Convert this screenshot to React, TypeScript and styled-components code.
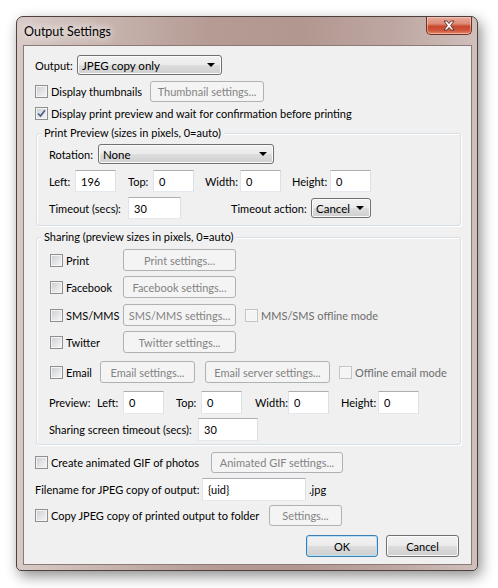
import React from 'react'
import styled, { createGlobalStyle } from 'styled-components'

const GlobalStyle = createGlobalStyle`
  html, body {
    margin: 0;
    padding: 0;
    background: #ffffff;
  }
  body {
    width: 498px;
    height: 588px;
    overflow: hidden;
    font-family: Lato, "Noto Sans", sans-serif;
    font-size: 11px;
    color: #000;
  }
`

const Page = styled.div`
  padding: 16px 0 0 16px;
`

const Window = styled.div`
  width: 462px;
  height: 555px;
  box-sizing: border-box;
  border: 1px solid #4f403d;
  border-radius: 7px 7px 5px 5px;
  background: linear-gradient(90deg, #d8cbc7 0%, #c9b5b0 18%, #b59b94 42%, #b29790 62%, #bea7a2 82%, #cfbfbb 100%);
  box-shadow: 3px 5px 14px rgba(0, 0, 0, 0.45);
  display: flex;
  flex-direction: column;
`

const TitleBar = styled.div`
  height: 28px;
  display: flex;
  justify-content: space-between;
  align-items: flex-start;
`

const Title = styled.div`
  font-size: 12.5px;
  padding: 7px 0 0 7px;
  color: #000;
  text-shadow: 0 0 8px #fff, 0 0 12px #fff;
`

const CloseButton = styled.div`
  width: 46px;
  height: 18px;
  margin-right: 5px;
  box-sizing: border-box;
  border: 1px solid #6e3127;
  border-top: none;
  border-radius: 0 0 5px 5px;
  background: linear-gradient(#e8ab9c 0%, #dc8a76 40%, #c8472f 55%, #d0583c 80%, #e48b6c 100%);
  box-shadow: inset 0 0 0 1px rgba(255, 220, 210, 0.5);
  display: flex;
  align-items: center;
  justify-content: center;
`

const Client = styled.div`
  margin: 0 5px 5px 6px;
  height: 520px;
  box-sizing: border-box;
  border: 1px solid #8c7a76;
  background: #f0f0f0;
  padding-left: 11px;
  display: flex;
  flex-direction: column;
`

const Row = styled.div<{ $mt: number; $h: number; $end?: boolean }>`
  display: flex;
  align-items: center;
  margin-top: ${(p) => p.$mt}px;
  height: ${(p) => p.$h}px;
  justify-content: ${(p) => (p.$end ? 'flex-end' : 'flex-start')};
  padding-right: ${(p) => (p.$end ? 12 : 0)}px;
`

const Label = styled.span<{ $w?: number; $ml?: number; $dim?: boolean }>`
  display: inline-block;
  flex: none;
  width: ${(p) => (p.$w ? `${p.$w}px` : 'auto')};
  margin-left: ${(p) => p.$ml ?? 0}px;
  white-space: nowrap;
  color: ${(p) => (p.$dim ? '#6d6d6d' : '#000')};
`

const CheckCell = styled.label<{ $w?: number; $ml?: number }>`
  display: flex;
  align-items: center;
  flex: none;
  width: ${(p) => (p.$w ? `${p.$w}px` : 'auto')};
  margin-left: ${(p) => p.$ml ?? 0}px;
  white-space: nowrap;
`

const Box = styled.span<{ $disabled?: boolean }>`
  width: 13px;
  height: 13px;
  box-sizing: border-box;
  flex: none;
  margin-right: 3px;
  border: 1px solid ${(p) => (p.$disabled ? '#c4c4c4' : '#8e8f8f')};
  background: ${(p) =>
    p.$disabled
      ? '#f4f4f4'
      : 'linear-gradient(135deg, #c9ccd1 0%, #e4e5e7 55%, #f7f7f7 100%)'};
  box-shadow: inset 0 0 0 1px ${(p) => (p.$disabled ? '#f7f7f7' : '#f4f4f4')};
  display: flex;
  align-items: center;
  justify-content: center;
`

const Button = styled.div<{ $w: number; $h: number; $ml?: number; $disabled?: boolean; $default?: boolean }>`
  width: ${(p) => p.$w}px;
  height: ${(p) => p.$h}px;
  margin-left: ${(p) => p.$ml ?? 0}px;
  flex: none;
  box-sizing: border-box;
  border-radius: 3px;
  display: flex;
  align-items: center;
  justify-content: center;
  white-space: nowrap;
  border: 1px solid ${(p) => (p.$disabled ? '#adb2b5' : p.$default ? '#3c7fb1' : '#707070')};
  color: ${(p) => (p.$disabled ? '#838383' : '#000')};
  background: ${(p) =>
    p.$disabled
      ? '#f4f4f4'
      : 'linear-gradient(#f2f2f2 0%, #ebebeb 49%, #dddddd 51%, #cfcfcf 100%)'};
  box-shadow: inset 0 0 0 1px ${(p) => (p.$disabled ? '#f4f4f4' : p.$default ? '#b8e1f9' : '#fbfbfb')};
`

const Select = styled.div<{ $w: number }>`
  width: ${(p) => p.$w}px;
  height: 20px;
  flex: none;
  box-sizing: border-box;
  border: 1px solid #707070;
  border-radius: 3px;
  background: linear-gradient(#f2f2f2 0%, #ebebeb 49%, #dddddd 51%, #cfcfcf 100%);
  box-shadow: inset 0 0 0 1px #fbfbfb;
  display: flex;
  align-items: center;
  justify-content: space-between;
  padding: 0 6px 0 4px;
  white-space: nowrap;
  font-size: 11.5px;
`

const Arrow = styled.span`
  width: 0;
  height: 0;
  border-left: 4px solid transparent;
  border-right: 4px solid transparent;
  border-top: 4px solid #000;
`

const Input = styled.div<{ $w: number; $h: number }>`
  width: ${(p) => p.$w}px;
  height: ${(p) => p.$h}px;
  flex: none;
  box-sizing: border-box;
  border: 1px solid;
  border-color: #abadb3 #dbdfe6 #e3e9ef #e2e3ea;
  background: #fff;
  padding-left: 5px;
  display: flex;
  align-items: center;
  white-space: nowrap;
`

const Group = styled.div<{ $mt: number; $h: number }>`
  position: relative;
  margin-top: ${(p) => p.$mt}px;
  margin-left: 1px;
  width: 425px;
  height: ${(p) => p.$h}px;
  box-sizing: border-box;
  border: 1px solid #d5dfe5;
  border-radius: 3px;
  box-shadow: inset 1px 1px 0 #fff, 1px 1px 0 #fff;
  padding-left: 12px;
  display: flex;
  flex-direction: column;
`

const Legend = styled.span`
  position: absolute;
  top: -8px;
  left: 4px;
  padding: 0 3px;
  background: #f0f0f0;
  white-space: nowrap;
`

const Check = ({ checked, disabled }: { checked?: boolean; disabled?: boolean }) => (
  <Box $disabled={disabled}>
    {checked && (
      <svg width="9" height="9" viewBox="0 0 9 9">
        <path d="M1 4.5 L3.5 7 L8 1.2" fill="none" stroke="#4a5f8c" strokeWidth="1.7" />
      </svg>
    )}
  </Box>
)

const CloseGlyph = () => (
  <svg width="14" height="11" viewBox="0 0 14 11">
    <path
      d="M2 1 L5 1 L7 3.5 L9 1 L12 1 L8.6 5.5 L12 10 L9 10 L7 7.5 L5 10 L2 10 L5.4 5.5 Z"
      fill="#fff"
      stroke="#5a2a22"
      strokeWidth="0.9"
      strokeLinejoin="round"
    />
  </svg>
)

export default function App() {
  return (
    <Page>
      <GlobalStyle />
      <Window>
        <TitleBar>
          <Title>Output Settings</Title>
          <CloseButton>
            <CloseGlyph />
          </CloseButton>
        </TitleBar>
        <Client>
          <Row $mt={9} $h={20}>
            <Label $w={42}>Output:</Label>
            <Select $w={145}>
              JPEG copy only
              <Arrow />
            </Select>
          </Row>
          <Row $mt={6} $h={21}>
            <CheckCell $w={115}>
              <Check />
              Display thumbnails
            </CheckCell>
            <Button $w={114} $h={21} $disabled>
              Thumbnail settings...
            </Button>
          </Row>
          <Row $mt={3} $h={17}>
            <CheckCell>
              <Check checked />
              Display print preview and wait for confirmation before printing
            </CheckCell>
          </Row>

          <Group $mt={11} $h={93}>
            <Legend>Print Preview (sizes in pixels, 0=auto)</Legend>
            <Row $mt={10} $h={20}>
              <Label $w={49}>Rotation:</Label>
              <Select $w={176}>
                None
                <Arrow />
              </Select>
            </Row>
            <Row $mt={6} $h={22}>
              <Label $w={26}>Left:</Label>
              <Input $w={41} $h={22}>196</Input>
              <Label $w={25} $ml={12}>Top:</Label>
              <Input $w={41} $h={22}>0</Input>
              <Label $w={35} $ml={11}>Width:</Label>
              <Input $w={41} $h={22}>0</Input>
              <Label $w={38} $ml={11}>Height:</Label>
              <Input $w={41} $h={22}>0</Input>
            </Row>
            <Row $mt={5} $h={22}>
              <Label $w={79}>Timeout (secs):</Label>
              <Input $w={53} $h={22}>30</Input>
              <Label $w={80} $ml={50}>Timeout action:</Label>
              <Select $w={60}>
                Cancel
                <Arrow />
              </Select>
            </Row>
          </Group>

          <Group $mt={11} $h={208}>
            <Legend>Sharing (preview sizes in pixels, 0=auto)</Legend>
            <Row $mt={11} $h={22}>
              <CheckCell $w={73} $ml={1}>
                <Check />
                Print
              </CheckCell>
              <Button $w={113} $h={22} $disabled>
                Print settings...
              </Button>
            </Row>
            <Row $mt={5} $h={22}>
              <CheckCell $w={73} $ml={1}>
                <Check />
                Facebook
              </CheckCell>
              <Button $w={113} $h={22} $disabled>
                Facebook settings...
              </Button>
            </Row>
            <Row $mt={6} $h={22}>
              <CheckCell $w={73} $ml={1}>
                <Check />
                SMS/MMS
              </CheckCell>
              <Button $w={113} $h={22} $disabled>
                SMS/MMS settings...
              </Button>
              <CheckCell $ml={9}>
                <Check disabled />
                <Label $dim>MMS/SMS offline mode</Label>
              </CheckCell>
            </Row>
            <Row $mt={5} $h={22}>
              <CheckCell $w={73} $ml={1}>
                <Check />
                Twitter
              </CheckCell>
              <Button $w={113} $h={22} $disabled>
                Twitter settings...
              </Button>
            </Row>
            <Row $mt={8} $h={22}>
              <CheckCell $w={50} $ml={1}>
                <Check />
                Email
              </CheckCell>
              <Button $w={95} $h={22} $disabled>
                Email settings...
              </Button>
              <Button $w={125} $h={22} $ml={10} $disabled>
                Email server settings...
              </Button>
              <CheckCell $ml={9}>
                <Check disabled />
                <Label $dim>Offline email mode</Label>
              </CheckCell>
            </Row>
            <Row $mt={8} $h={23}>
              <Label $w={48}>Preview:</Label>
              <Label $w={26}>Left:</Label>
              <Input $w={41} $h={23}>0</Input>
              <Label $w={25} $ml={12}>Top:</Label>
              <Input $w={41} $h={23}>0</Input>
              <Label $w={33} $ml={13}>Width:</Label>
              <Input $w={41} $h={23}>0</Input>
              <Label $w={37} $ml={12}>Height:</Label>
              <Input $w={41} $h={23}>0</Input>
            </Row>
            <Row $mt={4} $h={23}>
              <Label $w={149}>Sharing screen timeout (secs):</Label>
              <Input $w={60} $h={23}>30</Input>
            </Row>
          </Group>

          <Row $mt={7} $h={21}>
            <CheckCell $w={176}>
              <Check />
              Create animated GIF of photos
            </CheckCell>
            <Button $w={132} $h={21} $disabled>
              Animated GIF settings...
            </Button>
          </Row>
          <Row $mt={5} $h={23}>
            <Label $w={167}>Filename for JPEG copy of output:</Label>
            <Input $w={104} $h={23}>{'{uid}'}</Input>
            <Label $ml={3}>.jpg</Label>
          </Row>
          <Row $mt={4} $h={21}>
            <CheckCell $w={234}>
              <Check />
              Copy JPEG copy of printed output to folder
            </CheckCell>
            <Button $w={73} $h={21} $disabled>
              Settings...
            </Button>
          </Row>
          <Row $mt={9} $h={22} $end>
            <Button $w={72} $h={22} $default>
              OK
            </Button>
            <Button $w={73} $h={22} $ml={8}>
              Cancel
            </Button>
          </Row>
        </Client>
      </Window>
    </Page>
  )
}
